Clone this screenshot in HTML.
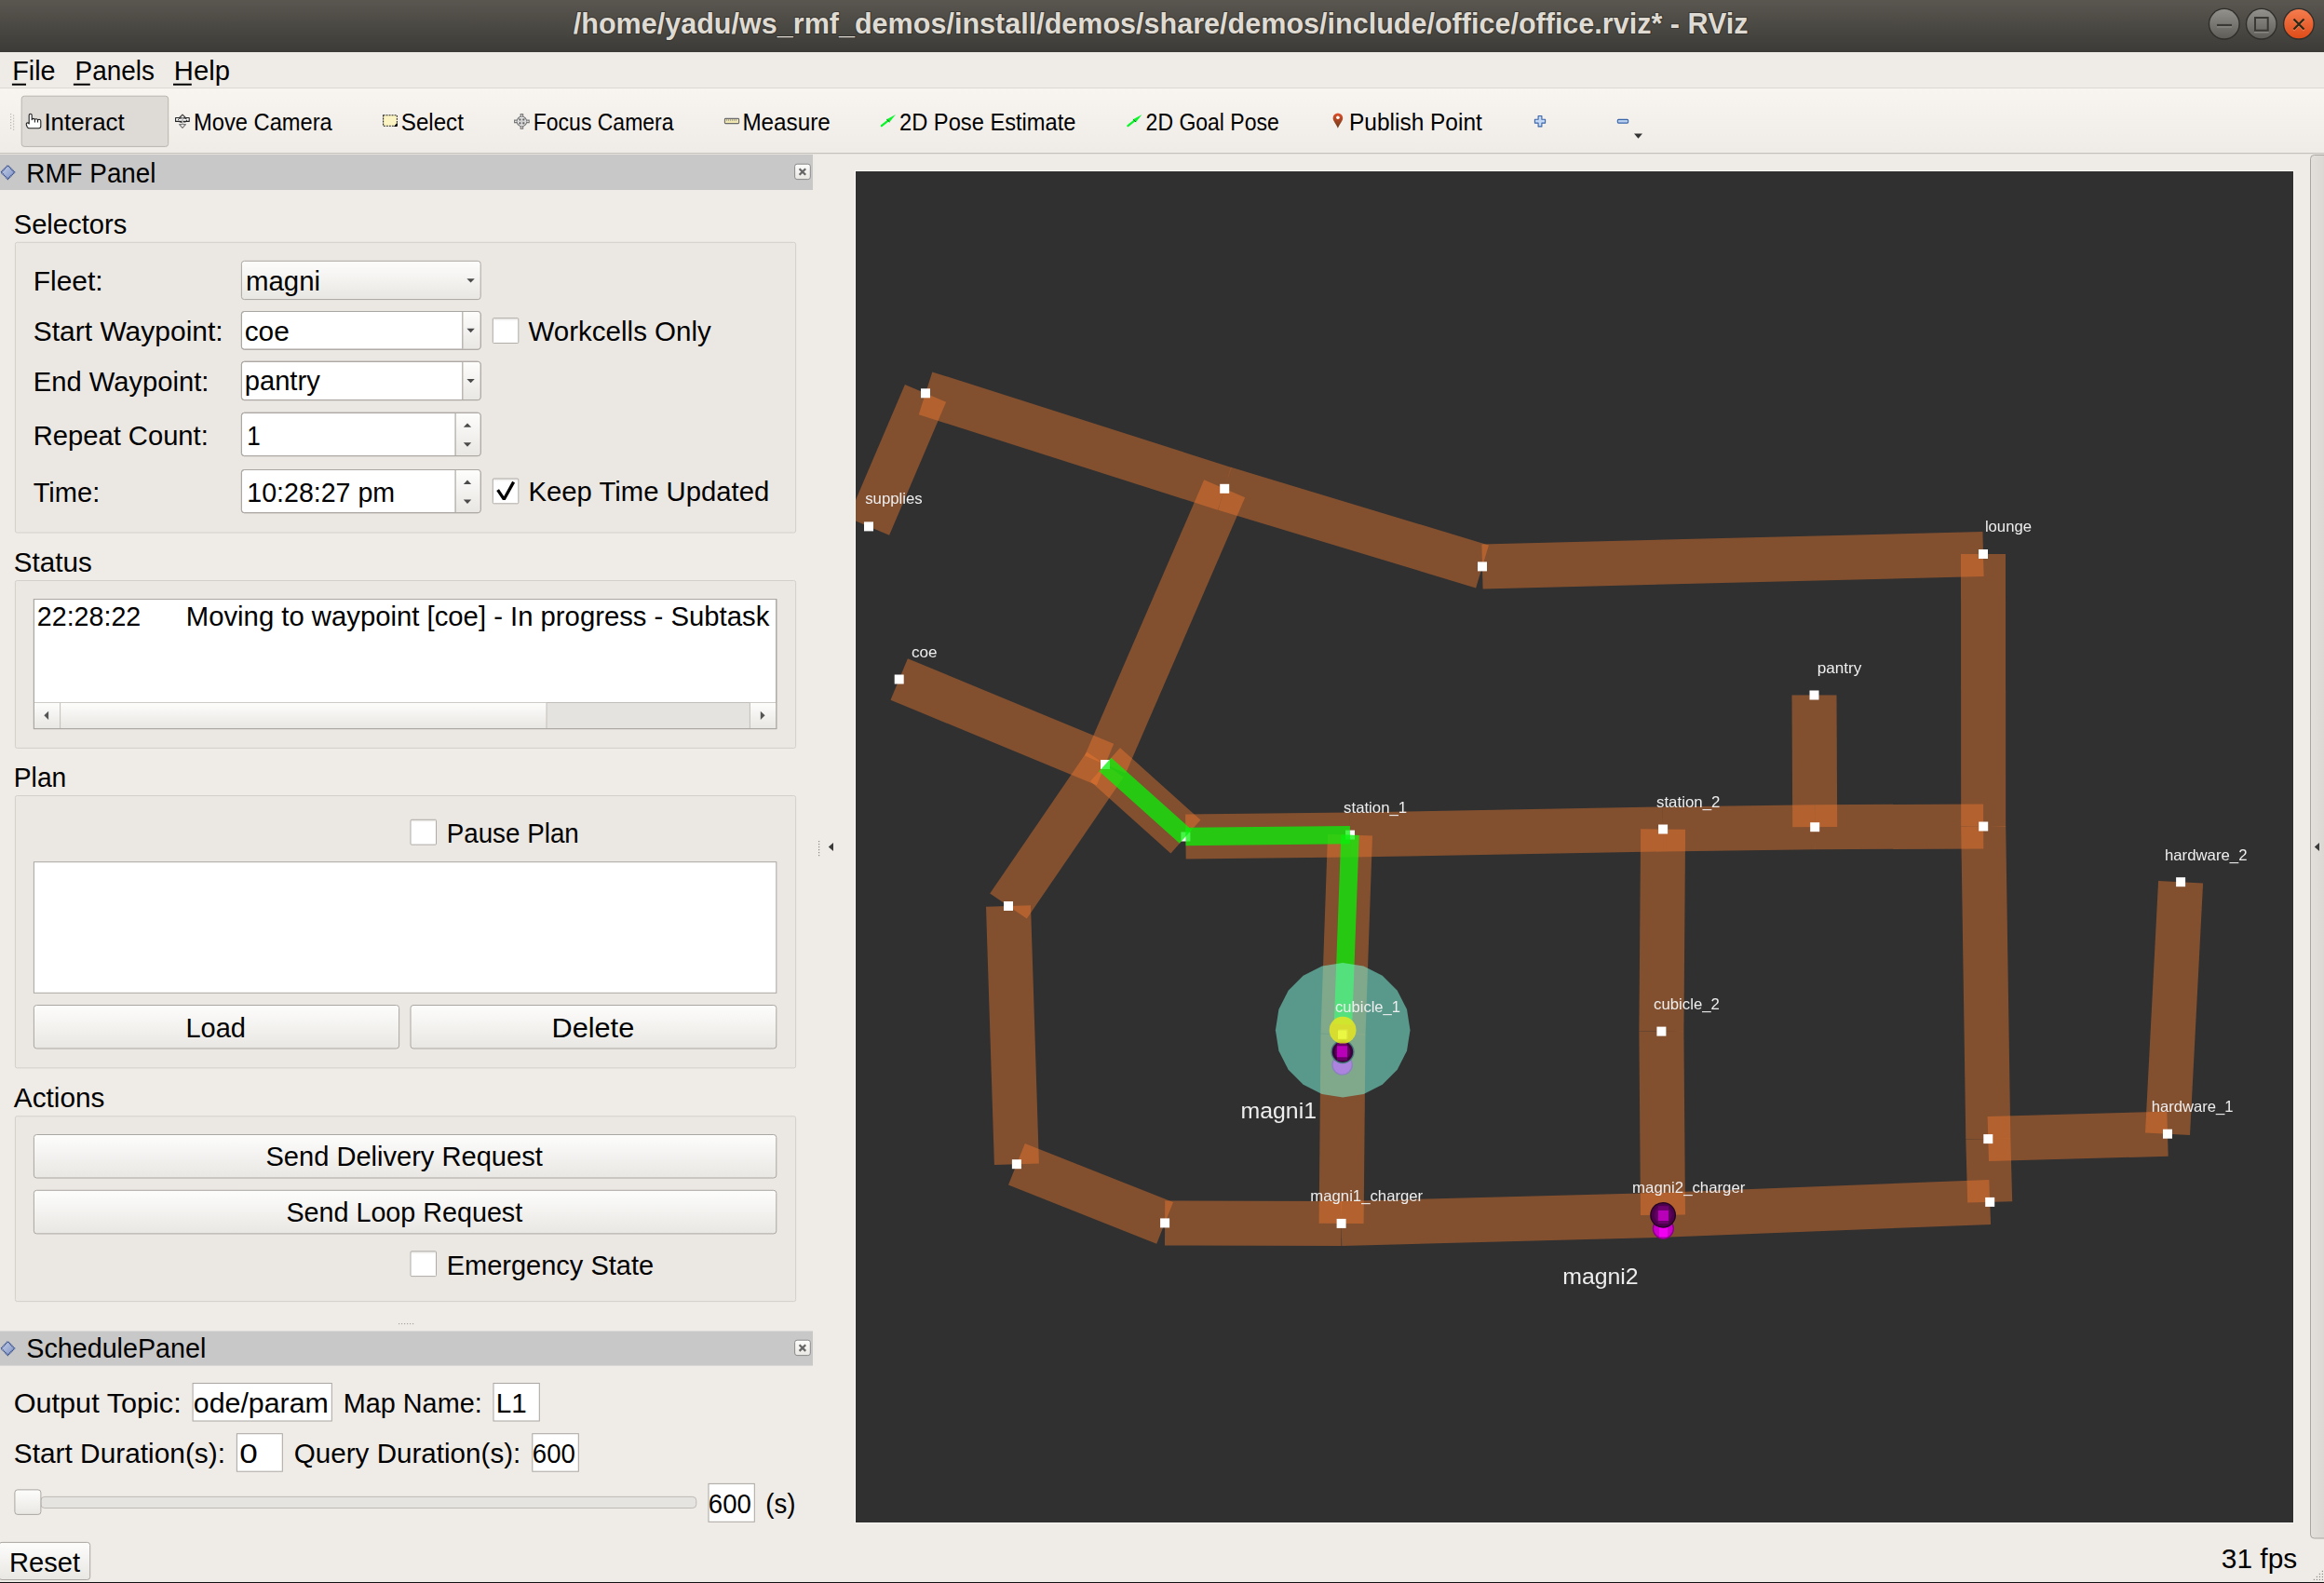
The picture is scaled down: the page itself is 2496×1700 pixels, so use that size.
<!DOCTYPE html><html><head><meta charset="utf-8"><style>html,body{margin:0;padding:0;background:#efebe7;overflow:hidden}</style></head><body><svg width="2496" height="1700" viewBox="0 0 2496 1700" style="display:block;font-family:'Liberation Sans', sans-serif">
<defs>
<linearGradient id="gTitle" x1="0" y1="0" x2="0" y2="1"><stop offset="0" stop-color="#5a5650"/><stop offset="1" stop-color="#3c3b37"/></linearGradient>
<linearGradient id="gTool" x1="0" y1="0" x2="0" y2="1"><stop offset="0" stop-color="#f8f5f0"/><stop offset="1" stop-color="#efebe6"/></linearGradient>
<linearGradient id="gBtn" x1="0" y1="0" x2="0" y2="1"><stop offset="0" stop-color="#fdfdfc"/><stop offset="1" stop-color="#e9e7e3"/></linearGradient>
<linearGradient id="gGrayBtn" x1="0" y1="0" x2="0" y2="1"><stop offset="0" stop-color="#93918c"/><stop offset="1" stop-color="#5f5d58"/></linearGradient>
<linearGradient id="gClose" x1="0" y1="0" x2="0" y2="1"><stop offset="0" stop-color="#f47c4e"/><stop offset="1" stop-color="#df4c18"/></linearGradient>
<linearGradient id="gSide" x1="0" y1="0" x2="1" y2="0"><stop offset="0" stop-color="#e3e0dc"/><stop offset="1" stop-color="#d9d6d2"/></linearGradient>
<linearGradient id="gDia" x1="0" y1="0" x2="1" y2="1"><stop offset="0" stop-color="#c4d0e8"/><stop offset="1" stop-color="#8092c4"/></linearGradient>
<linearGradient id="gChk" x1="0" y1="0" x2="0" y2="1"><stop offset="0" stop-color="#e8e6e3"/><stop offset="0.12" stop-color="#ffffff"/><stop offset="1" stop-color="#ffffff"/></linearGradient>
<linearGradient id="gPin" x1="0" y1="0" x2="0" y2="1"><stop offset="0" stop-color="#e0502c"/><stop offset="1" stop-color="#6a3a1a"/></linearGradient>
</defs>
<rect x="0.0" y="0.0" width="2496.0" height="1700.0" rx="0" fill="#efebe7" />
<rect x="0.0" y="0.0" width="2496.0" height="56.0" rx="0" fill="url(#gTitle)" />
<g stroke="#2a2824" stroke-width="2.2" stroke-opacity="0.55" paint-order="stroke" stroke-linejoin="round">
<text x="615.8" y="36.0" font-size="31" fill="#dfdbd2" font-weight="bold" textLength="1261.8" lengthAdjust="spacingAndGlyphs" >/home/yadu/ws_rmf_demos/install/demos/share/demos/include/office/office.rviz* - RViz</text>
</g>
<circle cx="2388.8" cy="25.7" r="17" fill="#2f2e2b"/>
<circle cx="2388.8" cy="25.7" r="15.6" fill="url(#gGrayBtn)"/>
<circle cx="2428.8" cy="25.7" r="17" fill="#2f2e2b"/>
<circle cx="2428.8" cy="25.7" r="15.6" fill="url(#gGrayBtn)"/>
<circle cx="2468.9" cy="25.7" r="17" fill="#2f2e2b"/>
<circle cx="2468.9" cy="25.7" r="15.6" fill="url(#gClose)"/>
<rect x="2381" y="28.1" width="16" height="1.4" fill="#a09e99" fill-opacity="0.6"/><rect x="2421" y="33.8" width="15.7" height="1.6" fill="#a09e99" fill-opacity="0.6"/><path d="M2463.5 22 L2474.5 33 M2474.5 22 L2463.5 33" stroke="#f7a080" stroke-width="1.4" stroke-opacity="0.6"/>
<rect x="2381" y="25.9" width="16" height="2.2" fill="#3a3935"/>
<rect x="2422" y="19" width="13.7" height="13.7" fill="none" stroke="#3a3935" stroke-width="2"/>
<path d="M2463.5 20.5 L2474.5 31.5 M2474.5 20.5 L2463.5 31.5" stroke="#2b2a18" stroke-width="2.2"/>
<rect x="0.0" y="56.0" width="2496.0" height="38.5" rx="0" fill="#efebe7" />
<rect x="0.0" y="94.0" width="2496.0" height="1.0" rx="0" fill="#dcd8d3" />
<text x="13.3" y="86.0" font-size="30" fill="#000" font-weight="normal" textLength="46.3" lengthAdjust="spacingAndGlyphs" >File</text>
<text x="80.5" y="86.0" font-size="30" fill="#000" font-weight="normal" textLength="85.4" lengthAdjust="spacingAndGlyphs" >Panels</text>
<text x="186.8" y="86.0" font-size="30" fill="#000" font-weight="normal" textLength="60.1" lengthAdjust="spacingAndGlyphs" >Help</text>
<rect x="12.9" y="89.7" width="15.1" height="2.0" rx="0" fill="#000" />
<rect x="78.9" y="89.7" width="17.9" height="2.0" rx="0" fill="#000" />
<rect x="186.0" y="89.7" width="19.8" height="2.0" rx="0" fill="#000" />
<rect x="0.0" y="95.0" width="2496.0" height="69.0" rx="0" fill="url(#gTool)" />
<rect x="0.0" y="164.0" width="2496.0" height="1.2" rx="0" fill="#c4c0bb" />
<rect x="11.0" y="122.0" width="1.2" height="1.2" rx="0" fill="#b8b4af" />
<rect x="14.0" y="123.5" width="1.2" height="1.2" rx="0" fill="#b8b4af" />
<rect x="11.0" y="125.0" width="1.2" height="1.2" rx="0" fill="#b8b4af" />
<rect x="14.0" y="126.5" width="1.2" height="1.2" rx="0" fill="#b8b4af" />
<rect x="11.0" y="128.0" width="1.2" height="1.2" rx="0" fill="#b8b4af" />
<rect x="14.0" y="129.5" width="1.2" height="1.2" rx="0" fill="#b8b4af" />
<rect x="11.0" y="131.0" width="1.2" height="1.2" rx="0" fill="#b8b4af" />
<rect x="14.0" y="132.5" width="1.2" height="1.2" rx="0" fill="#b8b4af" />
<rect x="11.0" y="134.0" width="1.2" height="1.2" rx="0" fill="#b8b4af" />
<rect x="14.0" y="135.5" width="1.2" height="1.2" rx="0" fill="#b8b4af" />
<rect x="11.0" y="137.0" width="1.2" height="1.2" rx="0" fill="#b8b4af" />
<rect x="14.0" y="138.5" width="1.2" height="1.2" rx="0" fill="#b8b4af" />
<rect x="23.2" y="103.2" width="157.5" height="54.2" rx="3" fill="#dedad6" stroke="#b9b4ae" stroke-width="1" />
<text x="47.4" y="140.0" font-size="25" fill="#000" font-weight="normal" textLength="86.3" lengthAdjust="spacingAndGlyphs" >Interact</text>
<text x="208.0" y="140.0" font-size="25" fill="#000" font-weight="normal" textLength="148.8" lengthAdjust="spacingAndGlyphs" >Move Camera</text>
<text x="430.8" y="140.0" font-size="25" fill="#000" font-weight="normal" textLength="67.1" lengthAdjust="spacingAndGlyphs" >Select</text>
<text x="572.8" y="140.0" font-size="25" fill="#000" font-weight="normal" textLength="150.7" lengthAdjust="spacingAndGlyphs" >Focus Camera</text>
<text x="797.4" y="140.0" font-size="25" fill="#000" font-weight="normal" textLength="94.4" lengthAdjust="spacingAndGlyphs" >Measure</text>
<text x="966.0" y="140.0" font-size="25" fill="#000" font-weight="normal" textLength="189.5" lengthAdjust="spacingAndGlyphs" >2D Pose Estimate</text>
<text x="1230.6" y="140.0" font-size="25" fill="#000" font-weight="normal" textLength="143.2" lengthAdjust="spacingAndGlyphs" >2D Goal Pose</text>
<text x="1449.0" y="140.0" font-size="25" fill="#000" font-weight="normal" textLength="142.8" lengthAdjust="spacingAndGlyphs" >Publish Point</text>
<path d="M31.2 131 V123.8 Q31.2 122.3 32.7 122.3 Q34.2 122.3 34.2 123.8 V128.6 Q34.5 127.4 35.9 127.4 Q37.3 127.4 37.4 128.7 Q37.7 127.7 39 127.7 Q40.3 127.7 40.5 129 Q40.9 128.3 42.2 128.3 Q43.8 128.4 43.8 130.1 V135.6 Q43.8 137.8 41.5 137.8 H31.6 Q30.1 137.8 29.3 136.5 L28.3 134 Q28 132.1 29.5 131.9 Q30.6 131.7 31.2 132.9 Z M37.4 128.8 V131.5 M40.5 129.1 V131.5" fill="#fff" stroke="#1e1e1e" stroke-width="1.1" stroke-linejoin="round"/>
<g stroke-width="1.1" stroke-linejoin="round"><rect x="188.6" y="126.5" width="14.6" height="3.9" fill="#fff" stroke="#222"/><path d="M196 123.2 L192.2 127 H199.8 Z" fill="#fff" stroke="#333"/><ellipse cx="196" cy="129" rx="4.6" ry="2.6" fill="none" stroke="#333" stroke-dasharray="1.4,0.8"/><path d="M192.6 133.6 H199.4 L196 137.4 Z" fill="#fff" stroke="#777"/><path d="M196 126.5 V133.6" stroke="#bbb" stroke-width="1.6"/></g>
<rect x="411.6" y="123.7" width="14.8" height="11.6" fill="#fbf3c2" stroke="#222" stroke-width="1.1" stroke-dasharray="1.9,1.1"/>
<path d="M423.6 135.5 L426.4 132.4 V135.5 Z" fill="#000" stroke="#000" stroke-width="0.8"/>
<g stroke="#7a7a7a" stroke-width="1.2" fill="#fff"><path d="M552.6 129.2 H559.2 V122.6 H561.6 V129.2 H568.2 V131.6 H561.6 V138.2 H559.2 V131.6 H552.6 Z"/><circle cx="560.4" cy="130.4" r="5.2"/></g><g fill="#666"><rect x="557.3" y="127.3" width="2.3" height="2.3"/><rect x="561.2" y="127.3" width="2.3" height="2.3"/><rect x="557.3" y="131.2" width="2.3" height="2.3"/><rect x="561.2" y="131.2" width="2.3" height="2.3"/></g><path d="M554 130.4 H567 M560.4 124 V137" stroke="#c4c4c4" stroke-width="0.8"/>
<rect x="778.4" y="127.4" width="15.2" height="5.2" rx="0.8" fill="#efe6b0" stroke="#6a6a6a" stroke-width="1.1"/>
<path d="M780.6 128 v2 M782.6 128 v2 M784.6 128 v2 M786.6 128 v2 M788.6 128 v2 M790.6 128 v2" stroke="#8a8a8a" stroke-width="0.7"/>
<path d="M946.8 135.1 L953.8 129.6" stroke="#0af52a" stroke-width="2.3" stroke-linecap="round"/><path d="M952.3 128.2 L955.5 131 L961.9 123 Z" fill="#0af52a"/><path d="M952.3 128.2 L955.5 131" stroke="#0a7a1a" stroke-width="1"/>
<path d="M1211.4 135.1 L1218.4 129.6" stroke="#0af52a" stroke-width="2.3" stroke-linecap="round"/><path d="M1216.9 128.2 L1220.1000000000001 131 L1226.5 123 Z" fill="#0af52a"/><path d="M1216.9 128.2 L1220.1000000000001 131" stroke="#0a7a1a" stroke-width="1"/>
<path d="M1436.9 137.7 C1435 133 1431.6 130 1431.6 126.8 A5.3 5.3 0 0 1 1442.2 126.8 C1442.2 130 1438.8 133 1436.9 137.7 z" fill="url(#gPin)"/><circle cx="1436.9" cy="126.2" r="1.8" fill="#fff"/>
<path d="M1652.1 124.5 h3.8 v3.8 h3.7 v3.8 h-3.7 v3.8 h-3.8 v-3.8 h-3.7 v-3.8 h3.7 z" fill="#c4d8f4" stroke="#3864aa" stroke-width="1.1" stroke-linejoin="round"/>
<rect x="1737.3" y="128.4" width="11.4" height="3.7" rx="1" fill="#b8d0f0" stroke="#3864aa" stroke-width="1.1"/>
<path d="M1755 143.6 h9 l-4.5 5.2 z" fill="#333"/>
<rect x="0.0" y="166.0" width="873.0" height="38.0" rx="0" fill="#c8c8c8" />
<path d="M1.2 185.0 L8.4 177.6 L15.6 185.0 L8.4 192.4 z" fill="url(#gDia)" stroke="#344c8a" stroke-width="1.5" stroke-dasharray="1.2,0.6"/>
<text x="28.3" y="196.0" font-size="30" fill="#000" font-weight="normal" textLength="139.2" lengthAdjust="spacingAndGlyphs" >RMF Panel</text>
<rect x="853.6" y="176.2" width="16.7" height="16.4" rx="2.5" fill="url(#gBtn)" stroke="#8a8a8a" stroke-width="1" />
<path d="M858.6 181.2 l6.6 6.6 M865.2 181.2 l-6.6 6.6" stroke="#666666" stroke-width="2.3"/>
<text x="14.7" y="250.9" font-size="29" fill="#000" font-weight="normal" textLength="121.6" lengthAdjust="spacingAndGlyphs" >Selectors</text>
<rect x="16.4" y="260.3" width="838.2" height="311.7" rx="2" fill="#ebe7e3" stroke="#d3cfca" stroke-width="1" />
<text x="35.7" y="311.8" font-size="29" fill="#000" font-weight="normal" textLength="74.9" lengthAdjust="spacingAndGlyphs" >Fleet:</text>
<text x="35.7" y="365.6" font-size="29" fill="#000" font-weight="normal" textLength="204.0" lengthAdjust="spacingAndGlyphs" >Start Waypoint:</text>
<text x="35.7" y="419.9" font-size="29" fill="#000" font-weight="normal" textLength="188.8" lengthAdjust="spacingAndGlyphs" >End Waypoint:</text>
<text x="35.7" y="478.0" font-size="29" fill="#000" font-weight="normal" textLength="188.1" lengthAdjust="spacingAndGlyphs" >Repeat Count:</text>
<text x="35.7" y="539.0" font-size="29" fill="#000" font-weight="normal" textLength="71.6" lengthAdjust="spacingAndGlyphs" >Time:</text>
<rect x="259.4" y="280.3" width="256.8" height="41.3" rx="3" fill="url(#gBtn)" stroke="#aaa6a1" stroke-width="1" />
<text x="264.0" y="312.0" font-size="29" fill="#000" font-weight="normal" textLength="80.1" lengthAdjust="spacingAndGlyphs" >magni</text>
<path d="M501.40000000000003 299.2 h8.4 l-4.2 4.4 z" fill="#4a4a4a"/>
<rect x="259.4" y="334.5" width="256.8" height="40.7" rx="3" fill="#ffffff" stroke="#aaa6a1" stroke-width="1" />
<rect x="496.2" y="335.0" width="19.5" height="39.7" rx="0" fill="url(#gBtn)" />
<rect x="496.2" y="335.0" width="1.2" height="39.7" rx="0" fill="#aeaaa5" />
<rect x="259.4" y="334.5" width="256.8" height="40.7" rx="3" fill="none" stroke="#aaa6a1"/>
<text x="262.7" y="365.5" font-size="29" fill="#000" font-weight="normal" textLength="48.1" lengthAdjust="spacingAndGlyphs" >coe</text>
<path d="M501.40000000000003 352.85 h8.4 l-4.2 4.4 z" fill="#4a4a4a"/>
<rect x="259.4" y="388.3" width="256.8" height="41.3" rx="3" fill="#ffffff" stroke="#aaa6a1" stroke-width="1" />
<rect x="496.2" y="388.8" width="19.5" height="40.3" rx="0" fill="url(#gBtn)" />
<rect x="496.2" y="388.8" width="1.2" height="40.3" rx="0" fill="#aeaaa5" />
<rect x="259.4" y="388.3" width="256.8" height="41.3" rx="3" fill="none" stroke="#aaa6a1"/>
<text x="262.7" y="419.3" font-size="29" fill="#000" font-weight="normal" textLength="81.1" lengthAdjust="spacingAndGlyphs" >pantry</text>
<path d="M501.40000000000003 406.95000000000005 h8.4 l-4.2 4.4 z" fill="#4a4a4a"/>
<rect x="529.3" y="341.7" width="27.5" height="26.8" rx="1" fill="url(#gChk)" stroke="#b0aca7" stroke-width="1" />
<text x="567.5" y="366.4" font-size="29" fill="#000" font-weight="normal" textLength="196.3" lengthAdjust="spacingAndGlyphs" >Workcells Only</text>
<rect x="259.4" y="443.3" width="256.8" height="46.3" rx="3" fill="#ffffff" stroke="#aaa6a1" stroke-width="1" />
<rect x="488.5" y="443.8" width="27.2" height="45.3" rx="0" fill="url(#gBtn)" />
<rect x="488.5" y="443.8" width="1.2" height="45.3" rx="0" fill="#aeaaa5" />
<rect x="259.4" y="443.3" width="256.8" height="46.3" rx="3" fill="none" stroke="#aaa6a1"/>
<path d="M497.8 458.8 h8.4 l-4.2 -4.4 z" fill="#4a4a4a"/>
<path d="M497.8 475.3 h8.4 l-4.2 4.4 z" fill="#4a4a4a"/>
<rect x="259.4" y="504.5" width="256.8" height="46.2" rx="3" fill="#ffffff" stroke="#aaa6a1" stroke-width="1" />
<rect x="488.5" y="505.0" width="27.2" height="45.2" rx="0" fill="url(#gBtn)" />
<rect x="488.5" y="505.0" width="1.2" height="45.2" rx="0" fill="#aeaaa5" />
<rect x="259.4" y="504.5" width="256.8" height="46.2" rx="3" fill="none" stroke="#aaa6a1"/>
<path d="M497.8 520.0 h8.4 l-4.2 -4.4 z" fill="#4a4a4a"/>
<path d="M497.8 536.5 h8.4 l-4.2 4.4 z" fill="#4a4a4a"/>
<text x="265.3" y="477.8" font-size="29" fill="#000" font-weight="normal" textLength="14.5" lengthAdjust="spacingAndGlyphs" >1</text>
<text x="265.3" y="539.0" font-size="29" fill="#000" font-weight="normal" textLength="158.8" lengthAdjust="spacingAndGlyphs" >10:28:27 pm</text>
<rect x="529.3" y="514.0" width="27.5" height="26.8" rx="1" fill="url(#gChk)" stroke="#b0aca7" stroke-width="1" />
<path d="M534.6 526.2 L541.3 536.2 L551.6 517.6" fill="none" stroke="#000" stroke-width="3.3" stroke-linejoin="bevel"/>
<text x="567.5" y="538.0" font-size="29" fill="#000" font-weight="normal" textLength="258.7" lengthAdjust="spacingAndGlyphs" >Keep Time Updated</text>
<text x="14.8" y="613.8" font-size="29" fill="#000" font-weight="normal" textLength="84.0" lengthAdjust="spacingAndGlyphs" >Status</text>
<rect x="16.4" y="623.5" width="838.2" height="179.9" rx="2" fill="#ebe7e3" stroke="#d3cfca" stroke-width="1" />
<rect x="36.4" y="643.5" width="797.4" height="139.1" rx="0" fill="#ffffff" stroke="#aaa6a1" stroke-width="1" />
<text x="39.8" y="671.7" font-size="29" fill="#000" font-weight="normal" textLength="111.5" lengthAdjust="spacingAndGlyphs" >22:28:22</text>
<text x="199.8" y="671.7" font-size="29" fill="#000" font-weight="normal" textLength="626.5" lengthAdjust="spacingAndGlyphs" >Moving to waypoint [coe] - In progress - Subtask</text>
<rect x="36.9" y="754.0" width="796.4" height="28.1" rx="0" fill="#e5e3e0" />
<rect x="36.4" y="754.0" width="797.4" height="0.8" rx="0" fill="#b9b5b0" />
<rect x="37.0" y="754.8" width="27.6" height="27.2" rx="0" fill="url(#gBtn)" />
<rect x="64.6" y="754.8" width="522.4" height="27.2" rx="0" fill="url(#gBtn)" />
<rect x="64.1" y="754.8" width="1.0" height="27.2" rx="0" fill="#c3bfba" />
<rect x="586.5" y="754.8" width="1.0" height="27.2" rx="0" fill="#c3bfba" />
<rect x="805.4" y="754.8" width="27.9" height="27.2" rx="0" fill="url(#gBtn)" />
<rect x="804.9" y="754.8" width="1.0" height="27.2" rx="0" fill="#c3bfba" />
<path d="M47.3 768.3 l4.8 -4.6 v9.2 z" fill="#555"/><path d="M821.6 768.3 l-4.8 -4.6 v9.2 z" fill="#555"/>
<rect x="36.4" y="643.5" width="797.4" height="139.1" fill="none" stroke="#aaa6a1"/>
<text x="14.8" y="845.0" font-size="29" fill="#000" font-weight="normal" textLength="56.5" lengthAdjust="spacingAndGlyphs" >Plan</text>
<rect x="16.4" y="854.5" width="838.2" height="292.4" rx="2" fill="#ebe7e3" stroke="#d3cfca" stroke-width="1" />
<rect x="441.0" y="880.3" width="27.5" height="26.8" rx="1" fill="url(#gChk)" stroke="#b0aca7" stroke-width="1" />
<text x="479.7" y="905.0" font-size="29" fill="#000" font-weight="normal" textLength="142.1" lengthAdjust="spacingAndGlyphs" >Pause Plan</text>
<rect x="36.4" y="925.7" width="797.4" height="140.6" rx="0" fill="#ffffff" stroke="#aaa6a1" stroke-width="1" />
<rect x="36.4" y="1079.5" width="392.2" height="46.5" rx="3" fill="url(#gBtn)" stroke="#aaa6a1" stroke-width="1" />
<rect x="441.0" y="1079.5" width="392.8" height="46.5" rx="3" fill="url(#gBtn)" stroke="#aaa6a1" stroke-width="1" />
<text x="199.5" y="1113.6" font-size="29" fill="#000" font-weight="normal" textLength="64.5" lengthAdjust="spacingAndGlyphs" >Load</text>
<text x="592.5" y="1113.6" font-size="29" fill="#000" font-weight="normal" textLength="88.7" lengthAdjust="spacingAndGlyphs" >Delete</text>
<text x="14.8" y="1188.6" font-size="29" fill="#000" font-weight="normal" textLength="97.7" lengthAdjust="spacingAndGlyphs" >Actions</text>
<rect x="16.4" y="1198.8" width="838.2" height="198.8" rx="2" fill="#ebe7e3" stroke="#d3cfca" stroke-width="1" />
<rect x="36.4" y="1218.5" width="797.4" height="46.5" rx="3" fill="url(#gBtn)" stroke="#aaa6a1" stroke-width="1" />
<rect x="36.4" y="1278.3" width="797.4" height="46.6" rx="3" fill="url(#gBtn)" stroke="#aaa6a1" stroke-width="1" />
<text x="285.4" y="1251.8" font-size="29" fill="#000" font-weight="normal" textLength="297.4" lengthAdjust="spacingAndGlyphs" >Send Delivery Request</text>
<text x="307.4" y="1311.6" font-size="29" fill="#000" font-weight="normal" textLength="253.8" lengthAdjust="spacingAndGlyphs" >Send Loop Request</text>
<rect x="441.0" y="1343.8" width="27.5" height="26.8" rx="1" fill="url(#gChk)" stroke="#b0aca7" stroke-width="1" />
<text x="479.7" y="1369.0" font-size="29" fill="#000" font-weight="normal" textLength="222.4" lengthAdjust="spacingAndGlyphs" >Emergency State</text>
<rect x="428.0" y="1421.0" width="1.2" height="1.2" rx="0" fill="#a9a5a0" />
<rect x="431.0" y="1421.0" width="1.2" height="1.2" rx="0" fill="#a9a5a0" />
<rect x="434.0" y="1421.0" width="1.2" height="1.2" rx="0" fill="#a9a5a0" />
<rect x="437.0" y="1421.0" width="1.2" height="1.2" rx="0" fill="#a9a5a0" />
<rect x="440.0" y="1421.0" width="1.2" height="1.2" rx="0" fill="#a9a5a0" />
<rect x="443.0" y="1421.0" width="1.2" height="1.2" rx="0" fill="#a9a5a0" />
<rect x="0.0" y="1429.5" width="873.0" height="37.1" rx="0" fill="#c8c8c8" />
<path d="M1.2 1448.05 L8.4 1440.6499999999999 L15.6 1448.05 L8.4 1455.45 z" fill="url(#gDia)" stroke="#344c8a" stroke-width="1.5" stroke-dasharray="1.2,0.6"/>
<text x="28.3" y="1457.9" font-size="30" fill="#000" font-weight="normal" textLength="193.0" lengthAdjust="spacingAndGlyphs" >SchedulePanel</text>
<rect x="853.6" y="1439.2" width="16.7" height="16.4" rx="2.5" fill="url(#gBtn)" stroke="#8a8a8a" stroke-width="1" />
<path d="M858.6 1444.25 l6.6 6.6 M865.2 1444.25 l-6.6 6.6" stroke="#666666" stroke-width="2.3"/>
<text x="14.7" y="1516.6" font-size="29" fill="#000" font-weight="normal" textLength="180.0" lengthAdjust="spacingAndGlyphs" >Output Topic:</text>
<rect x="207.1" y="1485.5" width="149.2" height="40.5" rx="0" fill="#ffffff" stroke="#aaa6a1" stroke-width="1" />
<text x="207.8" y="1516.6" font-size="29" fill="#000" font-weight="normal" textLength="145.0" lengthAdjust="spacingAndGlyphs" >ode/param</text>
<text x="368.7" y="1516.6" font-size="29" fill="#000" font-weight="normal" textLength="149.0" lengthAdjust="spacingAndGlyphs" >Map Name:</text>
<rect x="530.0" y="1485.5" width="49.3" height="40.5" rx="0" fill="#ffffff" stroke="#aaa6a1" stroke-width="1" />
<text x="532.8" y="1516.6" font-size="29" fill="#000" font-weight="normal" textLength="33.0" lengthAdjust="spacingAndGlyphs" >L1</text>
<text x="14.8" y="1570.7" font-size="29" fill="#000" font-weight="normal" textLength="227.2" lengthAdjust="spacingAndGlyphs" >Start Duration(s):</text>
<rect x="254.4" y="1539.7" width="48.9" height="40.5" rx="0" fill="#ffffff" stroke="#aaa6a1" stroke-width="1" />
<text x="257.3" y="1570.7" font-size="29" fill="#000" font-weight="normal" textLength="19.5" lengthAdjust="spacingAndGlyphs" >0</text>
<text x="315.8" y="1570.7" font-size="29" fill="#000" font-weight="normal" textLength="243.5" lengthAdjust="spacingAndGlyphs" >Query Duration(s):</text>
<rect x="571.8" y="1539.7" width="49.5" height="40.5" rx="0" fill="#ffffff" stroke="#aaa6a1" stroke-width="1" />
<text x="571.8" y="1570.7" font-size="29" fill="#000" font-weight="normal" textLength="46.0" lengthAdjust="spacingAndGlyphs" >600</text>
<rect x="43.9" y="1607.4" width="703.9" height="12.1" rx="4" fill="#e6e4e1" stroke="#bdb9b4" stroke-width="1" />
<rect x="15.9" y="1599.9" width="28.0" height="26.5" rx="3" fill="url(#gBtn)" stroke="#aaa6a1" stroke-width="1" />
<rect x="761.0" y="1593.4" width="49.3" height="40.9" rx="0" fill="#ffffff" stroke="#aaa6a1" stroke-width="1" />
<text x="760.8" y="1624.8" font-size="29" fill="#000" font-weight="normal" textLength="46.0" lengthAdjust="spacingAndGlyphs" >600</text>
<text x="822.3" y="1624.8" font-size="29" fill="#000" font-weight="normal" textLength="32.3" lengthAdjust="spacingAndGlyphs" >(s)</text>
<rect x="-1.0" y="1656.4" width="97.7" height="40.1" rx="3" fill="url(#gBtn)" stroke="#aaa6a1" stroke-width="1" />
<text x="10.0" y="1688.0" font-size="29" fill="#000" font-weight="normal" textLength="76.0" lengthAdjust="spacingAndGlyphs" >Reset</text>
<rect x="879.0" y="903.0" width="1.2" height="1.2" rx="0" fill="#8e8a85" />
<rect x="879.0" y="906.0" width="1.2" height="1.2" rx="0" fill="#8e8a85" />
<rect x="879.0" y="909.0" width="1.2" height="1.2" rx="0" fill="#8e8a85" />
<rect x="879.0" y="912.0" width="1.2" height="1.2" rx="0" fill="#8e8a85" />
<rect x="879.0" y="915.0" width="1.2" height="1.2" rx="0" fill="#8e8a85" />
<rect x="879.0" y="918.0" width="1.2" height="1.2" rx="0" fill="#8e8a85" />
<path d="M889.8 909.5 l5.2 -4.6 v9.2 z" fill="#3a3a3a"/>
<rect x="2481.5" y="166.5" width="18.5" height="1485.5" rx="4" fill="url(#gSide)" stroke="#a9a5a0" stroke-width="1" />
<path d="M2485.8 909.5 l5.2 -4.6 v9.2 z" fill="#3a3a3a"/>
<text x="2385.8" y="1684.0" font-size="29" fill="#000" font-weight="normal" textLength="81.4" lengthAdjust="spacingAndGlyphs" >31 fps</text>
<rect x="0.0" y="1699.0" width="2496.0" height="1.0" rx="0" fill="#111111" />
<rect x="2493.8" y="1686.8" width="1.2" height="1.2" rx="0" fill="#8c8c8c" />
<rect x="2493.8" y="1689.8" width="1.2" height="1.2" rx="0" fill="#8c8c8c" />
<rect x="2490.8" y="1689.8" width="1.2" height="1.2" rx="0" fill="#8c8c8c" />
<rect x="2493.8" y="1692.8" width="1.2" height="1.2" rx="0" fill="#8c8c8c" />
<rect x="2490.8" y="1692.8" width="1.2" height="1.2" rx="0" fill="#8c8c8c" />
<rect x="2487.8" y="1692.8" width="1.2" height="1.2" rx="0" fill="#8c8c8c" />
<rect x="2493.8" y="1695.8" width="1.2" height="1.2" rx="0" fill="#8c8c8c" />
<rect x="2490.8" y="1695.8" width="1.2" height="1.2" rx="0" fill="#8c8c8c" />
<rect x="2487.8" y="1695.8" width="1.2" height="1.2" rx="0" fill="#8c8c8c" />
<rect x="2484.8" y="1695.8" width="1.2" height="1.2" rx="0" fill="#8c8c8c" />
<svg x="919" y="184" width="1544" height="1451" viewBox="919 184 1544 1451" overflow="hidden">
<rect x="919" y="184" width="1544" height="1451" fill="#303030"/>
<polygon points="955.1,574.8 1016.1,431.7 971.9,412.9 910.9,556.0" fill="rgb(245,124,48)" fill-opacity="0.42"/>
<polygon points="986.7,445.2 1307.9,547.7 1322.5,501.9 1001.3,399.4" fill="rgb(245,124,48)" fill-opacity="0.42"/>
<polygon points="1308.3,547.8 1585.1,631.4 1598.9,585.4 1322.1,501.8" fill="rgb(245,124,48)" fill-opacity="0.42"/>
<polygon points="1592.6,632.4 2130.6,619.0 2129.4,571.0 1591.4,584.4" fill="rgb(245,124,48)" fill-opacity="0.42"/>
<polygon points="2106.0,595.0 2106.2,887.5 2154.2,887.5 2154.0,595.0" fill="rgb(245,124,48)" fill-opacity="0.42"/>
<polygon points="2106.2,887.9 2111.3,1223.5 2159.3,1222.7 2154.2,887.1" fill="rgb(245,124,48)" fill-opacity="0.42"/>
<polygon points="2111.3,1223.8 2113.2,1291.6 2161.2,1290.2 2159.3,1222.4" fill="rgb(245,124,48)" fill-opacity="0.42"/>
<polygon points="956.5,751.7 1177.8,843.2 1196.2,798.8 974.9,707.3" fill="rgb(245,124,48)" fill-opacity="0.42"/>
<polygon points="1293.2,515.3 1165.0,811.5 1209.0,830.5 1337.2,534.3" fill="rgb(245,124,48)" fill-opacity="0.42"/>
<polygon points="1167.2,807.4 1063.2,959.4 1102.8,986.6 1206.8,834.6" fill="rgb(245,124,48)" fill-opacity="0.42"/>
<polygon points="1059.0,973.8 1067.9,1251.0 1115.9,1249.4 1107.0,972.2" fill="rgb(245,124,48)" fill-opacity="0.42"/>
<polygon points="1083.0,1272.5 1242.2,1335.7 1260.0,1291.1 1100.8,1227.9" fill="rgb(245,124,48)" fill-opacity="0.42"/>
<polygon points="1171.0,838.9 1257.4,916.4 1289.4,880.6 1203.0,803.1" fill="rgb(245,124,48)" fill-opacity="0.42"/>
<polygon points="1273.7,922.5 1450.3,920.6 1449.7,872.6 1273.1,874.5" fill="rgb(245,124,48)" fill-opacity="0.42"/>
<polygon points="1450.4,920.6 1786.5,914.5 1785.7,866.5 1449.6,872.6" fill="rgb(245,124,48)" fill-opacity="0.42"/>
<polygon points="1786.4,914.5 1949.5,912.2 1948.9,864.2 1785.8,866.5" fill="rgb(245,124,48)" fill-opacity="0.42"/>
<polygon points="1949.3,912.2 2130.3,911.5 2130.1,863.5 1949.1,864.2" fill="rgb(245,124,48)" fill-opacity="0.42"/>
<polygon points="1924.5,746.6 1925.2,888.3 1973.2,888.1 1972.5,746.4" fill="rgb(245,124,48)" fill-opacity="0.42"/>
<polygon points="1426.0,895.8 1418.5,1109.7 1466.5,1111.3 1474.0,897.4" fill="rgb(245,124,48)" fill-opacity="0.42"/>
<polygon points="1418.5,1110.3 1416.6,1313.7 1464.6,1314.1 1466.5,1110.7" fill="rgb(245,124,48)" fill-opacity="0.42"/>
<polygon points="1762.1,890.3 1760.4,1107.4 1808.4,1107.8 1810.1,890.7" fill="rgb(245,124,48)" fill-opacity="0.42"/>
<polygon points="1760.4,1107.8 1762.0,1305.0 1810.0,1304.6 1808.4,1107.4" fill="rgb(245,124,48)" fill-opacity="0.42"/>
<polygon points="1251.0,1337.4 1440.5,1337.9 1440.7,1289.9 1251.2,1289.4" fill="rgb(245,124,48)" fill-opacity="0.42"/>
<polygon points="1441.2,1337.9 1786.6,1328.8 1785.4,1280.8 1440.0,1289.9" fill="rgb(245,124,48)" fill-opacity="0.42"/>
<polygon points="1786.9,1328.8 2138.1,1314.9 2136.3,1266.9 1785.1,1280.8" fill="rgb(245,124,48)" fill-opacity="0.42"/>
<polygon points="2136.0,1247.1 2328.7,1241.7 2327.3,1193.7 2134.6,1199.1" fill="rgb(245,124,48)" fill-opacity="0.42"/>
<polygon points="2352.0,1218.9 2366.1,948.4 2318.1,946.0 2304.0,1216.5" fill="rgb(245,124,48)" fill-opacity="0.42"/>
<rect x="928.0" y="560.4" width="10" height="10" fill="#ffffff"/>
<rect x="989.0" y="417.3" width="10" height="10" fill="#ffffff"/>
<rect x="1310.2" y="519.8" width="10" height="10" fill="#ffffff"/>
<rect x="1587.0" y="603.4" width="10" height="10" fill="#ffffff"/>
<rect x="2125.0" y="590.0" width="10" height="10" fill="#ffffff"/>
<rect x="960.7" y="724.5" width="10" height="10" fill="#ffffff"/>
<rect x="1182.0" y="816.0" width="10" height="10" fill="#ffffff"/>
<rect x="1268.4" y="893.5" width="10" height="10" fill="#ffffff"/>
<rect x="1445.0" y="891.6" width="10" height="10" fill="#ffffff"/>
<rect x="1781.1" y="885.5" width="10" height="10" fill="#ffffff"/>
<rect x="1944.2" y="883.2" width="10" height="10" fill="#ffffff"/>
<rect x="1943.5" y="741.5" width="10" height="10" fill="#ffffff"/>
<rect x="2125.2" y="882.5" width="10" height="10" fill="#ffffff"/>
<rect x="1078.0" y="968.0" width="10" height="10" fill="#ffffff"/>
<rect x="1086.9" y="1245.2" width="10" height="10" fill="#ffffff"/>
<rect x="1246.1" y="1308.4" width="10" height="10" fill="#ffffff"/>
<rect x="1437.5" y="1105.5" width="10" height="10" fill="#ffffff"/>
<rect x="1435.6" y="1308.9" width="10" height="10" fill="#ffffff"/>
<rect x="1779.4" y="1102.6" width="10" height="10" fill="#ffffff"/>
<rect x="1781.0" y="1299.8" width="10" height="10" fill="#ffffff"/>
<rect x="2130.3" y="1218.1" width="10" height="10" fill="#ffffff"/>
<rect x="2132.2" y="1285.9" width="10" height="10" fill="#ffffff"/>
<rect x="2323.0" y="1212.7" width="10" height="10" fill="#ffffff"/>
<rect x="2337.1" y="942.2" width="10" height="10" fill="#ffffff"/>
<polygon points="1180.5,828.3 1266.9,905.8 1279.9,891.2 1193.5,813.7" fill="rgb(7,240,10)" fill-opacity="0.75"/>
<polygon points="1273.5,908.2 1450.1,906.3 1449.9,886.9 1273.3,888.8" fill="rgb(7,240,10)" fill-opacity="0.75"/>
<polygon points="1440.3,896.2 1432.8,1099.6 1452.2,1100.4 1459.7,897.0" fill="rgb(7,240,10)" fill-opacity="0.75"/>
<circle cx="1786.35" cy="1319.3" r="11.6" fill="#8a008a"/><circle cx="1786.35" cy="1319.3" r="10.3" fill="#cc00cc"/><rect x="1782" y="1312" width="9" height="16" fill="#f200f2"/>
<circle cx="1786.1" cy="1304.8" r="13.9" fill="#220022"/><circle cx="1786.1" cy="1304.8" r="12.6" fill="#4a004a"/><circle cx="1786.1" cy="1304.8" r="9.5" fill="#5e005e"/><rect x="1781" y="1295.2" width="11" height="19" fill="#6c006c"/><rect x="1780.9" y="1299.9" width="11" height="11.1" fill="#b800b8"/>
<circle cx="1441.6" cy="1143.5" r="11.35" fill="#9a009a"/><circle cx="1441.6" cy="1143.5" r="10" fill="#e000e0"/>
<polygon points="1514.5,1106.2 1511.0,1128.5 1500.7,1148.7 1484.7,1164.7 1464.5,1175.0 1442.2,1178.5 1419.9,1175.0 1399.7,1164.7 1383.7,1148.7 1373.4,1128.5 1369.9,1106.2 1373.4,1083.9 1383.7,1063.7 1399.7,1047.7 1419.9,1037.4 1442.2,1033.9 1464.5,1037.4 1484.7,1047.7 1500.7,1063.7 1511.0,1083.9" fill="rgb(127,248,221)" fill-opacity="0.53"/>
<circle cx="1442" cy="1129.6" r="12.6" fill="#3f7a78"/><circle cx="1442" cy="1129.6" r="11.2" fill="#3c003c"/><circle cx="1442" cy="1129.6" r="8.5" fill="#5c005c"/><rect x="1436" y="1120" width="11" height="19" fill="#680068"/><rect x="1435.9" y="1123.3" width="11.1" height="12" fill="#b800b8"/>
<circle cx="1442.1" cy="1106.2" r="14.4" fill="#e6e620" fill-opacity="0.85"/><rect x="1437" y="1106.7" width="9.1" height="9.1" fill="#ecfa44" fill-opacity="0.9"/>
<filter id="soft" x="-5%" y="-20%" width="110%" height="140%"><feGaussianBlur stdDeviation="0.25"/></filter><g filter="url(#soft)">
<text x="929.2" y="541.2" font-size="16.5" fill="#eeeeee" textLength="61.5" lengthAdjust="spacingAndGlyphs">supplies</text>
<text x="979.0" y="705.8" font-size="16.5" fill="#eeeeee" textLength="27.6" lengthAdjust="spacingAndGlyphs">coe</text>
<text x="2131.9" y="571.0" font-size="16.5" fill="#eeeeee" textLength="50.1" lengthAdjust="spacingAndGlyphs">lounge</text>
<text x="1951.7" y="722.7" font-size="16.5" fill="#eeeeee" textLength="47.7" lengthAdjust="spacingAndGlyphs">pantry</text>
<text x="1443.1" y="872.5" font-size="16.5" fill="#eeeeee" textLength="68.0" lengthAdjust="spacingAndGlyphs">station_1</text>
<text x="1779.0" y="866.5" font-size="16.5" fill="#eeeeee" textLength="68.4" lengthAdjust="spacingAndGlyphs">station_2</text>
<text x="2324.9" y="923.7" font-size="16.5" fill="#eeeeee" textLength="88.6" lengthAdjust="spacingAndGlyphs">hardware_2</text>
<text x="1434.0" y="1087.1" font-size="16.5" fill="#eeeeee" textLength="70.0" lengthAdjust="spacingAndGlyphs">cubicle_1</text>
<text x="1776.1" y="1083.8" font-size="16.5" fill="#eeeeee" textLength="70.8" lengthAdjust="spacingAndGlyphs">cubicle_2</text>
<text x="2310.7" y="1194.1" font-size="16.5" fill="#eeeeee" textLength="87.9" lengthAdjust="spacingAndGlyphs">hardware_1</text>
<text x="1407.3" y="1289.9" font-size="16.5" fill="#eeeeee" textLength="120.9" lengthAdjust="spacingAndGlyphs">magni1_charger</text>
<text x="1753.1" y="1280.9" font-size="16.5" fill="#eeeeee" textLength="121.3" lengthAdjust="spacingAndGlyphs">magni2_charger</text>
<text x="1332.5" y="1201" font-size="24.5" fill="#eeeeee" textLength="81.5" lengthAdjust="spacingAndGlyphs">magni1</text>
<text x="1678.2" y="1378.5" font-size="24.5" fill="#eeeeee" textLength="81.5" lengthAdjust="spacingAndGlyphs">magni2</text>
</g>
</svg>
<rect x="918" y="183" width="1546" height="1" fill="#f8f6f2"/><rect x="918" y="183" width="1" height="1453" fill="#fbfaf7"/><rect x="2463" y="183" width="1" height="1453" fill="#f8f6f2"/><rect x="918" y="1635" width="1546" height="1" fill="#f6f4f0"/>
</svg></body></html>
